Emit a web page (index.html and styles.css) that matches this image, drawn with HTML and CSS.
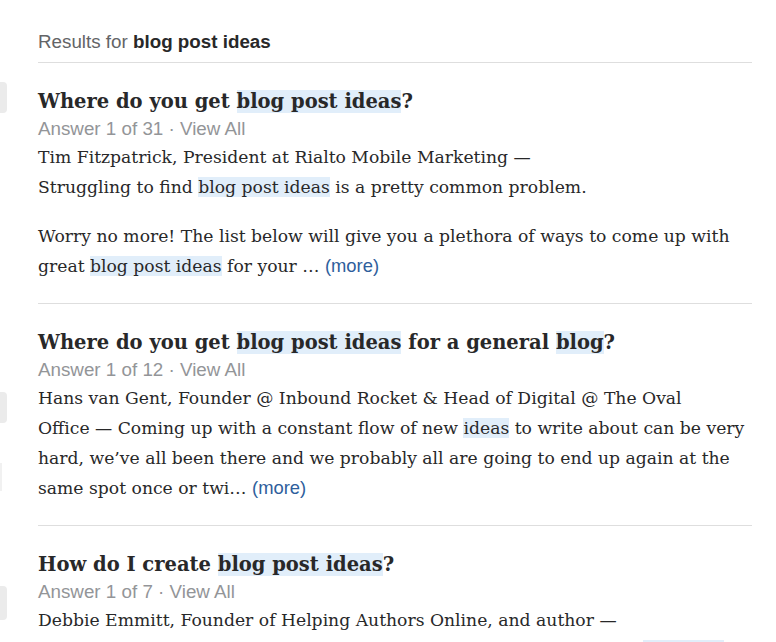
FILE: index.html
```html
<!DOCTYPE html>
<html lang="en">
<head>
  <meta charset="UTF-8" />
  <meta name="viewport" content="width=device-width, initial-scale=1.0"/>
  <title>Search results</title>
  <link rel="stylesheet" href="styles.css">
</head>
<body>

  <div class="page">
    <!-- left rail, mostly off screen -->
    <aside class="rail">
      <div class="rail-box first"></div>
      <div class="rail-box second"></div>
      <div class="rail-line"></div>
      <div class="rail-box third"></div>
    </aside>

    <main class="results">
      <div class="results-head">Results for <b>blog post ideas</b></div>

      <div class="result">
        <h2 class="question">Where do you get <span class="hl">blog post ideas</span>?</h2>
        <div class="meta">Answer 1 of 31 · View All</div>
        <div class="answer">
          <p>Tim Fitzpatrick, President at Rialto Mobile Marketing —<br>
          Struggling to find <span class="hl">blog post ideas</span> is a pretty common problem.</p>
          <p>Worry no more! The list below will give you a plethora of ways to come up with great <span class="hl">blog post ideas</span> for your … <a class="more" href="#">(more)</a></p>
        </div>
      </div>

      <div class="result">
        <h2 class="question">Where do you get <span class="hl">blog post ideas</span> for a general <span class="hl">blog</span>?</h2>
        <div class="meta">Answer 1 of 12 · View All</div>
        <div class="answer">
          <p>Hans van Gent, Founder @ Inbound Rocket &amp; Head of Digital @ The Oval<br>
          Office — Coming up with a constant flow of new <span class="hl">ideas</span> to write about can be very<br>
          hard, we’ve all been there and we probably all are going to end up again at the<br>
          same spot once or twi… <a class="more" href="#">(more)</a></p>
        </div>
      </div>

      <div class="result">
        <h2 class="question">How do I create <span class="hl">blog post ideas</span>?</h2>
        <div class="meta">Answer 1 of 7 · View All</div>
        <div class="answer">
          <p>Debbie Emmitt, Founder of Helping Authors Online, and author —<br>
          With the growth of content marketing, you will need a steady flow of <span class="hl">blog post</span> ideas.</p>
        </div>
      </div>
    </main>
  </div>

</body>
</html>
```

FILE: styles.css
```css
html, body {
  margin: 0;
  background: #fff;
  overflow: hidden;
}
.page {
  display: grid;
  grid-template-columns: 7px 1fr;
  column-gap: 31px;
  padding-right: 24px;
}
.rail {
  display: flex;
  flex-direction: column;
}
.rail-box {
  background: #ebebeb;
  border-radius: 0 4px 4px 0;
  height: 31px;
}
.rail-box.first {
  margin-top: 82px;
}
.rail-box.second {
  margin-top: 279px;
}
.rail-line {
  width: 2px;
  height: 28px;
  margin-top: 40px;
  background: #f1f1f1;
}
.rail-box.third {
  margin-top: 95px;
  height: 34px;
}
.results-head {
  font-family: "Liberation Sans", Arial, sans-serif;
  font-size: 18.8px;
  line-height: 24px;
  color: #636466;
  padding: 30px 0 8px;
  border-bottom: 1px solid #dedede;
}
.results-head b {
  color: #282829;
}
.result {
  padding: 24px 0 22px;
  border-bottom: 1px solid #dedede;
}
.question {
  font-family: "DejaVu Serif", Georgia, serif;
  font-size: 19.5px;
  line-height: 29px;
  font-weight: bold;
  color: #282829;
  margin: 0;
}
.hl {
  background: #e1eefa;
}
.meta {
  font-family: "Liberation Sans", Arial, sans-serif;
  font-size: 18.8px;
  line-height: 26px;
  color: #939598;
}
.answer {
  font-family: "DejaVu Serif", Georgia, serif;
  font-size: 17.2px;
  line-height: 30px;
  color: #282829;
}
.answer p {
  margin: 0;
}
.answer p + p {
  margin-top: 19px;
}
.more {
  font-family: "Liberation Sans", Arial, sans-serif;
  font-size: 18.4px;
  color: #2e5e9c;
  text-decoration: none;
}
```
